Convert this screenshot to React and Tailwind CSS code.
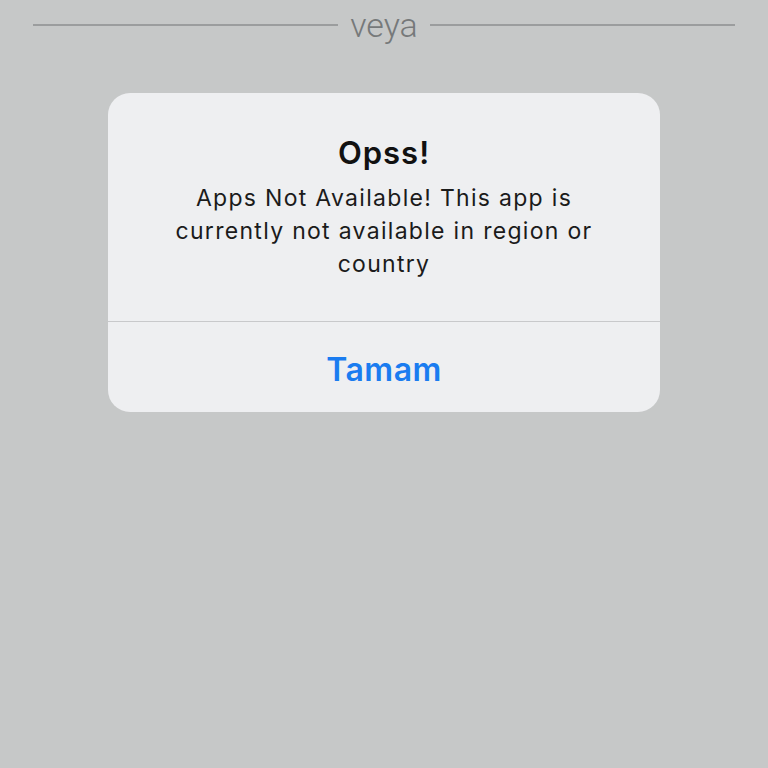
import React from 'react'

const App = () => {
  return (
    <div className="min-h-[768px] w-full bg-[#c6c8c8] font-['Inter',sans-serif]">
      {/* Divider header */}
      <div className="flex items-center gap-3 px-[33px] pt-[8px]">
        <div className="h-[2px] flex-1 bg-[#9b9d9e]" />
        <span className="text-[34px] leading-[34px] font-['Roboto',sans-serif] font-light text-[#76797a]">veya</span>
        <div className="h-[2px] flex-1 bg-[#9b9d9e]" />
      </div>

      {/* Alert */}
      <div className="mx-auto mt-[51px] w-[552px] overflow-hidden rounded-[22px] bg-[#eeeff1]">
        <div className="flex flex-col items-center px-[58px] pt-[42px] pb-[40px] text-center">
          <h2 className="text-[31px] leading-[36px] font-semibold tracking-[1px] text-[#111]">Opss!</h2>
          <p className="mt-[11px] text-[23px] leading-[33px] tracking-[1.3px] text-[#1b1b1b]">
            Apps Not Available! This app is currently not available in region or country
          </p>
        </div>
        <div className="h-px bg-[#c8c9cb]" />
        <button className="flex h-[90px] w-full items-center justify-center pt-[5px] text-[32px] font-semibold tracking-[0.5px] text-[#1a7cf0]">
          Tamam
        </button>
      </div>
    </div>
  )
}

export default App
